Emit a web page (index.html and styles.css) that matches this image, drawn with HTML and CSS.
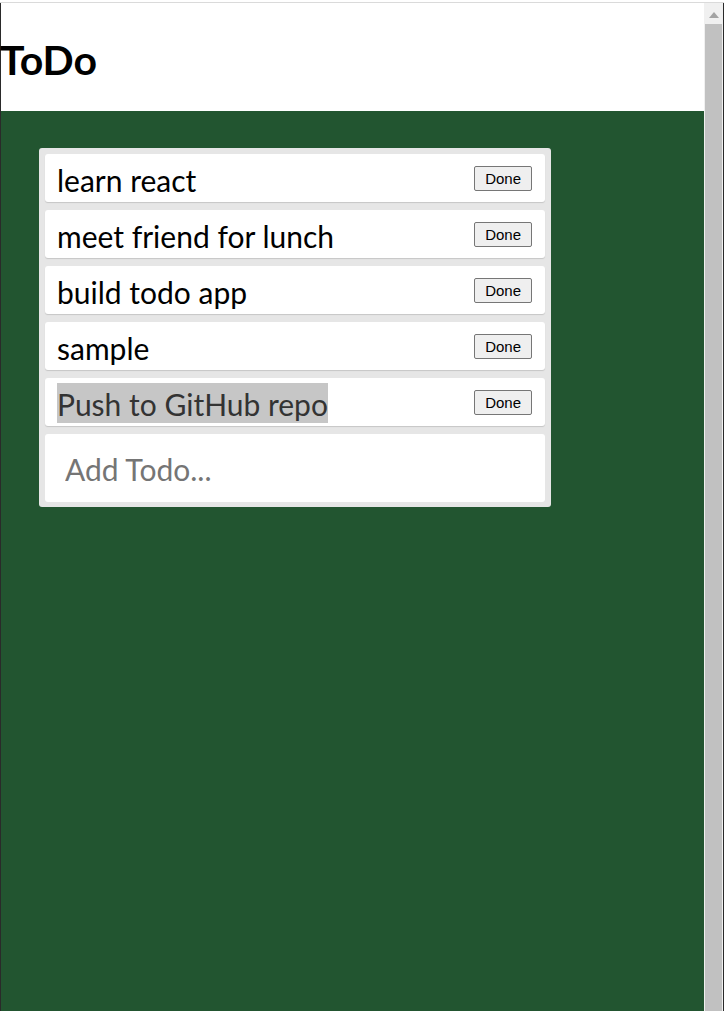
FILE: index.html
```html
<!DOCTYPE html>
<html>
<head>
<meta charset="utf-8">
<link rel="stylesheet" href="styles.css">
</head>
<body>
<div class="window">
  <div class="frame">
    <div class="page">
      <header class="header"><h1 class="title">ToDo</h1></header>
      <main class="content">
        <div class="list">
          <div class="item"><span class="item-text">learn react</span><button class="done">Done</button></div>
          <div class="item"><span class="item-text">meet friend for lunch</span><button class="done">Done</button></div>
          <div class="item"><span class="item-text">build todo app</span><button class="done">Done</button></div>
          <div class="item"><span class="item-text">sample</span><button class="done">Done</button></div>
          <div class="item"><span class="item-text selected">Push to GitHub repo</span><button class="done">Done</button></div>
          <div class="add"><input class="add-input" type="text" placeholder="Add Todo..."></div>
        </div>
      </main>
    </div>
    <div class="scrollbar">
      <div class="arrow"></div>
      <div class="thumb"></div>
    </div>
    <div class="edge"></div>
  </div>
</div>
</body>
</html>
```

FILE: styles.css
```css
html, body {
  margin: 0;
  padding: 0;
  background: #fff;
}
.window {
  height: 1011px;
  padding-top: 2px;
  box-sizing: border-box;
  overflow: hidden;
}
.frame {
  border-top: 1px solid #dadada;
  display: flex;
  height: 1008px;
}
.page {
  flex: 1;
  border-left: 1px solid #2a2a2a;
  display: flex;
  flex-direction: column;
  font-family: Lato, "Liberation Sans", sans-serif;
}
.header {
  height: 108px;
  background: #fff;
  display: flex;
  align-items: center;
}
.title {
  margin: 0;
  margin-left: -1px;
  padding-top: 4px;
  font-size: 41px;
  font-weight: 700;
  color: #000;
}
.content {
  flex: 1;
  background: #225530;
  padding: 37px 0 0 38px;
}
.list {
  width: 500px;
  background: #e6e6e6;
  border-radius: 3px;
  padding: 6px 6px 5px 6px;
  display: flex;
  flex-direction: column;
  gap: 8px;
}
.item {
  height: 48px;
  box-sizing: border-box;
  background: #fff;
  border-radius: 3px;
  box-shadow: 0 1px 1px rgba(0,0,0,0.14);
  display: flex;
  align-items: center;
  justify-content: space-between;
  padding: 0 13px 0 12px;
}
.item-text {
  font-size: 30px;
  color: #000;
  line-height: 40px;
  margin-top: 2px;
  padding-top: 2px;
  line-height: 38px;
}
.selected {
  background: #c6c6c6;
  color: #333;
}
.done {
  font-family: "Liberation Sans", Arial, sans-serif;
  font-size: 15px;
  line-height: 17px;
  padding: 3px 10px;
  margin-left: auto;
  background: #efefef;
  border: 1px solid #767676;
  border-radius: 2px;
  color: #000;
}
.add {
  height: 68px;
  background: #fff;
  border-radius: 3px;
  display: flex;
  align-items: center;
}
.add-input {
  border: none;
  outline: none;
  background: transparent;
  font-family: Lato, "Liberation Sans", sans-serif;
  font-size: 30px;
  padding: 0 0 0 20px;
  margin-top: 2px;
  width: 100%;
  color: #000;
}
.add-input::placeholder {
  color: #757575;
}
.scrollbar {
  width: 19px;
  background: #f0f0f0;
  display: flex;
  flex-direction: column;
  align-items: center;
}
.arrow {
  margin-top: 9px;
  width: 0;
  height: 0;
  border-left: 5px solid transparent;
  border-right: 5px solid transparent;
  border-bottom: 6px solid #a3a3a3;
}
.thumb {
  margin-top: 6px;
  width: 17px;
  flex: 1;
  background: #c1c1c1;
}
.edge {
  width: 1px;
  background: #2a2a2a;
}
```
